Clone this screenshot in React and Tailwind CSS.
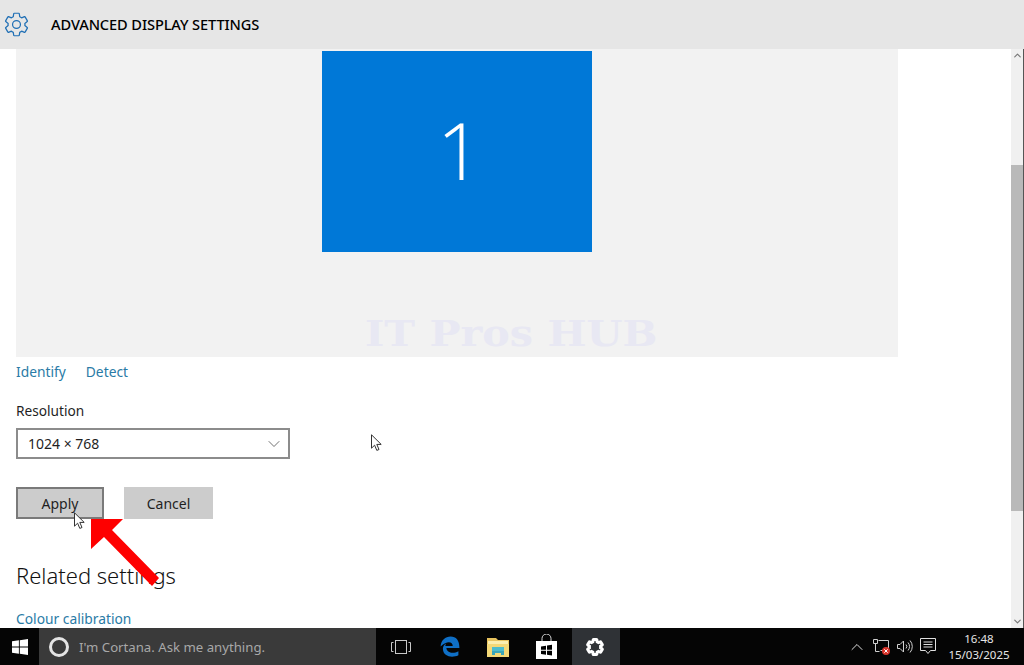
import { ChevronDown, ChevronUp } from 'lucide-react'

const GEAR = 'M19.43 12.98c.04-.32.07-.64.07-.98s-.03-.66-.07-.98l2.11-1.65c.19-.15.24-.42.12-.64l-2-3.46c-.12-.22-.39-.3-.61-.22l-2.49 1c-.52-.4-1.08-.73-1.69-.98l-.38-2.65C14.46 2.18 14.25 2 14 2h-4c-.25 0-.46.18-.49.42l-.38 2.65c-.61.25-1.17.59-1.69.98l-2.49-1c-.23-.09-.49 0-.61.22l-2 3.46c-.13.22-.07.49.12.64l2.11 1.65c-.04.32-.07.65-.07.98s.03.66.07.98l-2.11 1.65c-.19.15-.24.42-.12.64l2 3.46c.12.22.39.3.61.22l2.49-1c.52.4 1.08.73 1.69.98l.38 2.65c.03.24.24.42.49.42h4c.25 0 .46-.18.49-.42l.38-2.65c.61-.25 1.17-.59 1.69-.98l2.49 1c.23.09.49 0 .61-.22l2-3.46c.12-.22.07-.49-.12-.64l-2.11-1.65z'

function Pointer({ className }) {
  return (
    <svg className={className} width="11" height="17" viewBox="0 0 11 17">
      <path d="M.5.8v13.4l3.1-3 2.2 5.2 2.2-.9-2.2-5.1h4.4z" fill="#fff" stroke="#333" strokeWidth="1" strokeLinejoin="round" />
    </svg>
  )
}

function WinLogo() {
  return (
    <svg width="16" height="16" viewBox="0 0 16 16" fill="#fff">
      <path d="M0 2.3 6.9 1.3v6.3H0zM7.8 1.2 16 0v7.6H7.8zM0 8.4h6.9v6.3L0 13.7zM7.8 8.4H16V16l-8.2-1.2z" />
    </svg>
  )
}

function TaskView() {
  return (
    <svg width="20" height="16" viewBox="0 0 20 16" fill="none" stroke="#c8c8c8" strokeWidth="1">
      <rect x="4.5" y="1.5" width="11" height="13" />
      <path d="M2.5 3.5h-2v9h2M17.5 3.5h2v9h-2" />
    </svg>
  )
}

function EdgeIcon() {
  return (
    <svg width="20" height="21" viewBox="0 0 20 21">
      <path d="M.6 10.5C1 4.4 5.3.6 10.6.6c5.600 0 8.900 4 8.800 11.400H6.400c.2 4.700 6.800 6.200 12 3.200v4.100c-6.500 3.100-15.200 1.300-15.500-6.200-.1-2.400 1-4.300 3.300-5.600-.5.800-.8 1.600-.9 2.400h7.400c.2-3.700-4.900-6.300-12.100 .6z" fill="#0f6fc6" />
    </svg>
  )
}

function ExplorerIcon() {
  return (
    <svg width="22" height="20" viewBox="0 0 22 20">
      <path d="M0 1h9l2 2h11v17H0z" fill="#e8c35e" />
      <rect x="1" y="4" width="20" height="3" fill="#fbeeb0" />
      <rect x="0" y="7" width="22" height="13" fill="#f4d877" />
      <path d="M5 18v-4h12v4h-3v-2H8v2z" fill="#3aa6b9" />
      <rect x="5" y="10" width="12" height="4" fill="#4dbccd" />
    </svg>
  )
}

function StoreIcon() {
  return (
    <svg width="21" height="25" viewBox="0 0 21 25" fill="none">
      <path d="M6 7V4.500a4.500 4.500 0 0 1 9 0V7" stroke="#d8d8d8" strokeWidth="1" />
      <path d="M0 7h21v18H0z" fill="#fff" />
      <path d="M5 12.500 10 11.700V15.700H5zM11 11.600l5-.8v4.900h-5zM5 16.700h5v4l-5-.8zM11 16.700h5v4.900l-5-.8z" fill="#000" />
    </svg>
  )
}

function NetworkIcon() {
  return (
    <svg width="18" height="17" viewBox="0 0 18 17" fill="none">
      <path d="M5.500 2.500h10v10h-8M.5 1.500h4v4h-4zM2.500 5.500v8h4" stroke="#d0d0d0" strokeWidth="1" />
      <circle cx="13" cy="13" r="4" fill="#d9342b" />
      <path d="M11.300 11.300l3.400 3.400M14.700 11.300l-3.400 3.400" stroke="#fff" strokeWidth="1" />
    </svg>
  )
}

function VolumeIcon() {
  return (
    <svg width="16" height="15" viewBox="0 0 16 15" fill="none" stroke="#d0d0d0" strokeWidth="1">
      <path d="M.5 5.500h2.500l3.500-3.500v11L3 9.500H.5z" />
      <path d="M9 5.500a3 3 0 0 1 0 4M11 3.500a6 6 0 0 1 0 8M13 1.500a9 9 0 0 1 0 12" />
    </svg>
  )
}

function ActionCenter() {
  return (
    <svg width="16" height="17" viewBox="0 0 16 17" fill="none" stroke="#e0e0e0" strokeWidth="1">
      <path d="M.5.500h15v12h-5l-2.500 3-2.500-3h-5z" />
      <path d="M3.500 4h9M3.500 6.500h9M3.500 9h9" />
    </svg>
  )
}

export default function App() {
  return (
    <div className="relative flex h-[665px] w-[1024px] flex-col overflow-hidden bg-white font-['Noto_Sans',sans-serif] text-[#1f1f1f]">
      {/* Title bar */}
      <header className="flex h-[49px] shrink-0 items-center bg-[#e6e6e6]">
        <svg className="ml-[3px]" width="27" height="27" viewBox="0 0 24 24" fill="none" stroke="#1f6fb5" strokeWidth="1.100" strokeLinejoin="round">
          <path d={GEAR} />
          <circle cx="12" cy="12" r="3.500" />
        </svg>
        <h1 className="ml-[21px] text-[14.6px] font-medium tracking-[-0.1px] text-black">ADVANCED DISPLAY SETTINGS</h1>
      </header>

      <div className="flex min-h-0 flex-1">
        <main className="min-w-0 flex-1 overflow-hidden pl-4">
          <div className="relative flex h-[308px] w-[882px] justify-center bg-[#f2f2f2] pt-[2px]">
            <div className="flex h-[201px] w-[270px] items-center justify-center bg-[#0078d7] pb-[6px] pl-[5px] font-['Open_Sans',sans-serif] text-[80px] font-light leading-none text-white">
              1
            </div>
            <span className="absolute left-[349px] top-[267px] origin-left scale-x-[1.18] font-['DejaVu_Serif',serif] text-[35px] font-bold leading-[36px] whitespace-nowrap text-[#e8e8f3]">
              IT Pros HUB
            </span>
          </div>

          <div className="mt-[5px] flex h-[20px] items-center gap-5 text-[13.8px] text-[#2a7ba6]">
            <span>Identify</span>
            <span>Detect</span>
          </div>

          <p className="mt-[19px] text-[13.7px] leading-[20px]">Resolution</p>
          <div className="mt-[7px] flex h-[31px] w-[274px] items-center justify-between border-2 border-[#8c8c8c] pl-[10px] pr-[4px] text-[14px]">
            <span>1024 × 768</span>
            <ChevronDown size={20} strokeWidth={1} color="#555" />
          </div>

          <div className="mt-[28px] flex gap-5 text-[14px]">
            <button className="flex h-[32px] w-[88px] items-center justify-center border-2 border-[#7a7a7a] bg-[#cccccc]">Apply</button>
            <button className="flex h-[32px] w-[89px] items-center justify-center bg-[#cccccc]">Cancel</button>
          </div>

          <h2 className="mt-[40px] text-[22px] font-light leading-[32px] text-[#111]">Related settings</h2>
          <p className="mt-[18px] text-[13.8px] leading-[20px] text-[#2a7ba6]">Colour calibration</p>
        </main>

        {/* Scrollbar */}
        <div className="flex w-[13px] shrink-0 flex-col items-center border-r border-[#555] bg-[#f0f0f0]">
          <ChevronUp className="mt-px shrink-0" size={11} strokeWidth={2.500} color="#777" />
          <div className="mt-[104px] h-[346px] w-full shrink-0 bg-[#b9b9b9]" />
          <ChevronDown className="mt-[105px] shrink-0" size={11} strokeWidth={2.500} color="#777" />
        </div>
      </div>

      {/* Taskbar */}
      <footer className="flex h-[37px] shrink-0 items-center bg-[#050505] text-white">
        <div className="flex h-full w-[39px] items-center justify-center"><WinLogo /></div>
        <div className="flex h-full w-[337px] items-center bg-[#3a3a3a] pl-[10px] text-[#a8a8a8]">
          <span className="h-[20px] w-[20px] rounded-full border-[3px] border-[#e4e4e4]" />
          <span className="ml-[10px] mt-[2px] text-[13.2px]">I'm Cortana. Ask me anything.</span>
        </div>
        <div className="flex h-full w-[49px] items-center justify-center"><TaskView /></div>
        <div className="flex h-full w-[49px] items-center justify-center"><EdgeIcon /></div>
        <div className="flex h-full w-[48px] items-center justify-center"><ExplorerIcon /></div>
        <div className="flex h-full w-[48px] items-center justify-center"><StoreIcon /></div>
        <div className="ml-[2px] flex h-full w-[48px] items-center justify-center bg-[#2f3236] pr-[2px]">
          <svg width="18" height="18" viewBox="0 0 24 24" fill="none" stroke="#fff" strokeWidth="4">
            <path d={GEAR} />
          </svg>
        </div>
        <div className="ml-auto flex h-full items-center">
          <ChevronUp size={20} strokeWidth={1.200} color="#e0e0e0" />
          <span className="ml-[6px] flex"><NetworkIcon /></span>
          <span className="ml-[6px] flex"><VolumeIcon /></span>
          <span className="ml-[7px] flex"><ActionCenter /></span>
          <div className="ml-[7px] w-[72px] text-center text-[11.500px] leading-[16px] text-[#e6e6e6]">
            <div>16:48</div>
            <div>15/03/2025</div>
          </div>
          <div className="w-[9px]" />
        </div>
      </footer>

      {/* Overlays from the recording */}
      <svg className="absolute left-[88px] top-[517px]" width="76" height="74" viewBox="0 0 76 74">
        <path d="M3 2h32l-11 11 47 48-7 8-48-49-13 12z" fill="#fe0000" />
      </svg>
      <Pointer className="absolute left-[74px] top-[512px]" />
      <Pointer className="absolute left-[371px] top-[434px]" />
    </div>
  )
}
